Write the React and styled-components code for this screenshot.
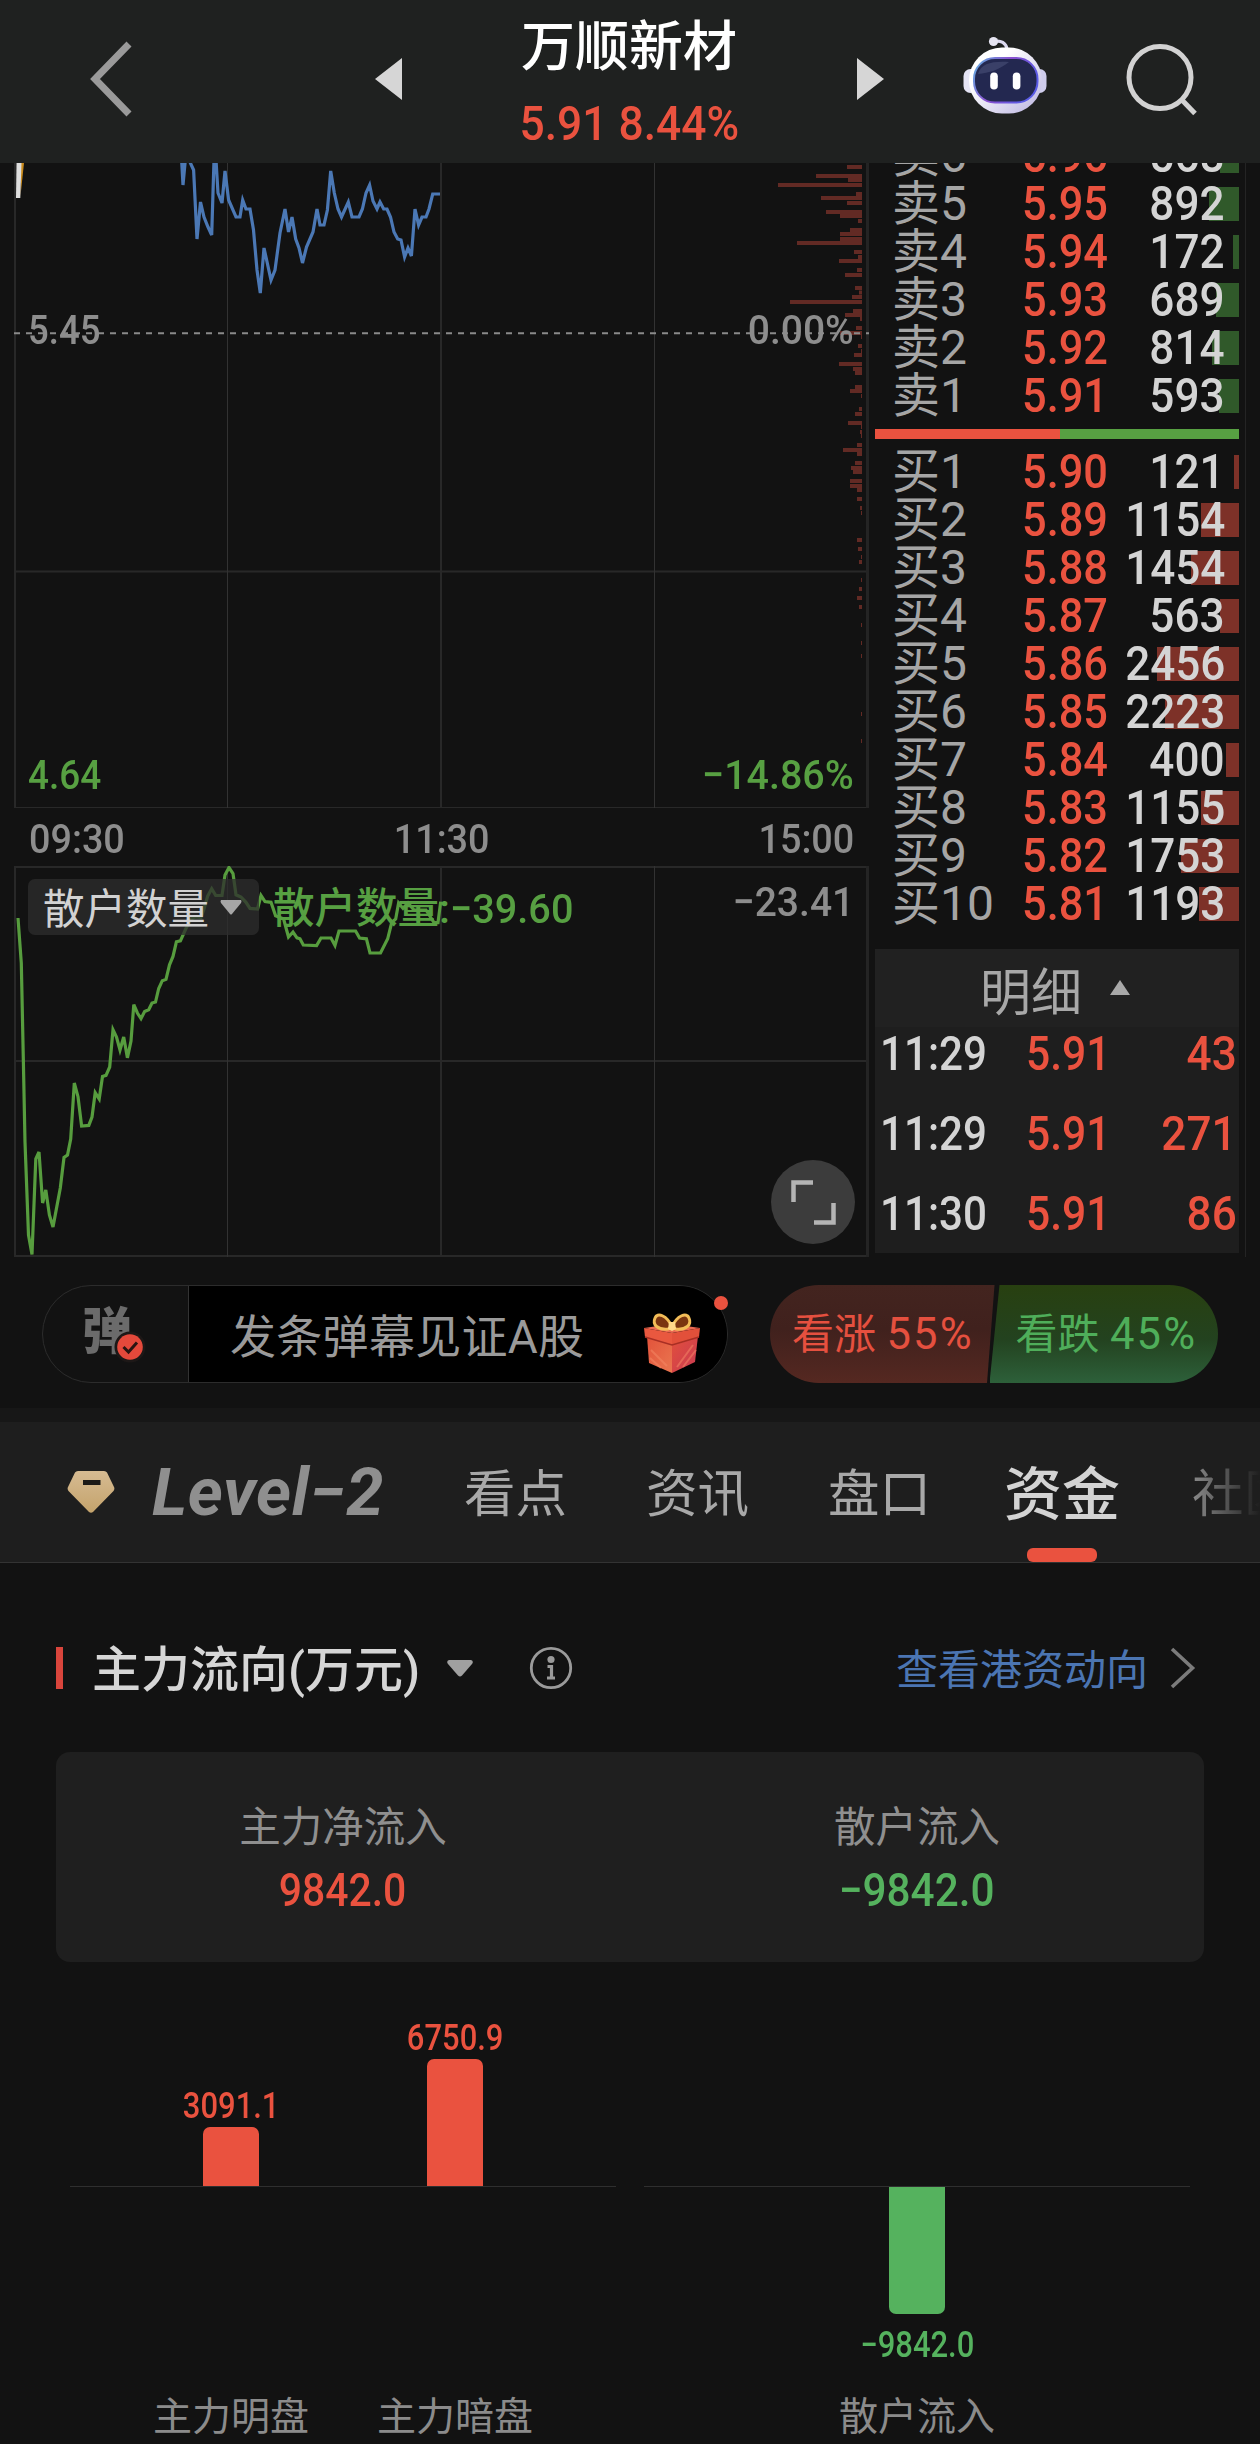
import React from 'react'
import styled, { createGlobalStyle } from 'styled-components'

const RED = '#ea523f'
const GREEN = '#55b25e'
const CHART_GREEN = '#57a042'

const sells = [
  { label: '卖6', price: '5.96', volume: 568 },
  { label: '卖5', price: '5.95', volume: 892 },
  { label: '卖4', price: '5.94', volume: 172 },
  { label: '卖3', price: '5.93', volume: 689 },
  { label: '卖2', price: '5.92', volume: 814 },
  { label: '卖1', price: '5.91', volume: 593 },
]

const buys = [
  { label: '买1', price: '5.90', volume: 121 },
  { label: '买2', price: '5.89', volume: 1154 },
  { label: '买3', price: '5.88', volume: 1454 },
  { label: '买4', price: '5.87', volume: 563 },
  { label: '买5', price: '5.86', volume: 2456 },
  { label: '买6', price: '5.85', volume: 2223 },
  { label: '买7', price: '5.84', volume: 400 },
  { label: '买8', price: '5.83', volume: 1155 },
  { label: '买9', price: '5.82', volume: 1753 },
  { label: '买10', price: '5.81', volume: 1193 },
]

const trades = [
  { time: '11:29', price: '5.91', volume: '43' },
  { time: '11:29', price: '5.91', volume: '271' },
  { time: '11:30', price: '5.91', volume: '86' },
]

const tabs = ['看点', '资讯', '盘口', '资金', '社区']

const flows = [
  [
    { label: '主力明盘', value: '3091.1', height: 59 },
    { label: '主力暗盘', value: '6750.9', height: 127 },
  ],
  [{ label: '散户流入', value: '−9842.0', height: 127, down: true }],
]

// [y, length] of the volume-by-price bars
const volumeBars = [
  [167, 15], [176, 46], [180, 14], [185, 84], [194, 6], [198, 41], [203, 15], [212, 36], [216, 22], [221, 4],
  [230, 12], [234, 22], [239, 22], [243, 65], [252, 8], [257, 4], [261, 23], [270, 5], [275, 17], [288, 7],
  [292.5, 3], [297, 10], [302, 72], [311, 9], [315, 17], [319, 2], [328, 6], [333, 22], [337, 1], [346, 4],
  [351, 1], [355, 8], [364, 23], [369, 9], [373, 7], [387, 7], [391, 12], [396, 1], [409, 3], [414, 7],
  [423, 14], [427, 1], [432, 2], [436, 1], [445, 5], [450, 19], [454, 5], [463, 7], [468, 11], [472, 9],
  [481, 12], [486, 12], [490, 5], [499, 5], [508, 2], [513, 1], [540, 5], [549, 4], [557, 1], [562, 3],
  [580, 1], [589, 3], [598, 5], [607, 3], [625, 1], [643, 1], [656, 1], [714, 1], [741, 1],
]

const pricePoints =
  '181.5,158 183,185 185.5,158 189,160 193.6,170 197,239 200.5,202 204,217 208,227 211.7,235 214,160 216,160 218,193 222,203 225,171 228.6,200 236,217 240,217 242.7,200 246,209 250,209 253.5,230 257,270 260.3,293 264,248 271,280 275,270 280,233 285,209 288.5,232 292,217 295.7,239 299,248 302.5,263 306.5,247 313,232 317,209 320,225 324,225 327.4,210 330.7,171 334.3,193 338,209 341.5,217 348.3,202 352,217 359,217 362.4,209 366,193 369.6,185 373,201 377,209 380,202 383.7,209 387,209 390.5,217 394,232 397.7,239 401,240 404.6,257 408,248 411.4,256 415,209 418.6,225 422,217 426,217 429,209 432.7,194 440,194'

const countPoints =
  '18,918 21.3,963 23.3,1058 25,1142 28.5,1235 32,1254.5 35.8,1159 39,1152 42.6,1203 45.8,1190 49.4,1215 53,1227 60.3,1188 64,1157.5 67.5,1155 70.7,1139 74.3,1083 78,1096.7 81.6,1126 88.8,1125.4 92,1117 95.2,1092.6 99.2,1099 102.5,1076.4 106,1075.4 109.7,1067 113,1029.7 116.5,1037 120,1050 123.7,1037 127.4,1057.8 131,1041 133.8,1004.7 137.4,1013 141,1018.6 144.6,1011.5 148.7,1009.8 152,1003 155.5,1002 158.7,988.5 162.3,980.7 166,979.4 169.5,964.8 173,956.4 176.4,941.8 180.4,940.8 185.6,929.3 191,919 195,917 201,917.5 204,909 207.7,896 211.7,888.7 215.7,895.5 222,895.5 225,875 229,867.5 233,873.5 236,894.8 241,897 246,902.3 250,908.4 257.5,909 261,895.5 265,901.6 271,902.3 275.6,915.8 283.6,919 288.5,937 293,932 297,937.8 300,938.8 303.3,945 316.6,945.5 321,938 331,938 335,945.5 339,931 355.6,931 359.6,938 366.4,938.8 370,953 380.5,953 387.7,938.8 391.7,922.6 395.7,919 398.6,903 403,908.4 408,903 414,910 426,910 434,922.6 438,922.6 440.7,901.6'

const PriceChart = () => (
  <StPlot viewBox="0 163 870 645" height="645">
    <g stroke="#282828" strokeWidth="2">
      <path d="M15 163V808 M441 163V808 M14 571.5H869 M14 808H869" />
      <path d="M227.5 163V808 M654.5 163V808" strokeWidth="1" stroke="#323232" />
      <path d="M867.5 163V808" strokeWidth="3" stroke="#242424" />
    </g>
    <g fill="#622a24">
      {volumeBars.map(([y, w]) => (
        <rect key={y} x={862 - w} y={y - 2} width={w} height="4" />
      ))}
    </g>
    <path d="M14 333.3H869" stroke="#8a8a8a" strokeWidth="2" strokeDasharray="6 6" />
    <path d="M21 163H24L20.5 196Z" fill="#c98a1b" />
    <path d="M16.5 163H21.5L20.3 198H16Z" fill="#dedede" />
    <polyline points={pricePoints} fill="none" stroke="#4b78b5" strokeWidth="3.2" />
  </StPlot>
)

const CountChart = () => (
  <StPlot viewBox="0 866 870 391" height="391">
    <g stroke="#282828" strokeWidth="2">
      <path d="M15 866V1257 M441 866V1257 M14 867H869 M14 1061H869 M14 1256H869" />
      <path d="M227.5 866V1257 M654.5 866V1257" strokeWidth="1" stroke="#323232" />
      <path d="M867.5 866V1257" strokeWidth="3" stroke="#242424" />
    </g>
    <polyline points={countPoints} fill="none" stroke="#579d3e" strokeWidth="3.2" />
  </StPlot>
)

const Robot = () => (
  <svg width="84" height="80" viewBox="0 0 84 80">
    <defs>
      <linearGradient id="shell" x1="0" y1="0" x2="1" y2="1">
        <stop offset="0.3" stopColor="#ffffff" />
        <stop offset="1" stopColor="#b9b3e0" />
      </linearGradient>
      <linearGradient id="rim" x1="0" y1="0" x2="1" y2="0.4">
        <stop offset="0" stopColor="#5fb3e0" />
        <stop offset="0.5" stopColor="#8a4fd0" />
        <stop offset="1" stopColor="#5a5be6" />
      </linearGradient>
    </defs>
    <path d="M31 5.5C38 4 43 7 44 13" fill="none" stroke="#dcdaf0" strokeWidth="3.2" />
    <circle cx="30.5" cy="5.5" r="4.6" fill="#e6e5f2" />
    <rect x="0.5" y="33" width="14" height="24" rx="7" fill="#e4e3f4" />
    <rect x="69.5" y="33" width="14" height="24" rx="7" fill="#cfcdec" />
    <rect x="6" y="11.5" width="73" height="66" rx="33" fill="url(#shell)" />
    <rect x="11" y="22" width="63.5" height="44.5" rx="21" fill="#232850" stroke="url(#rim)" strokeWidth="2" />
    <path d="M15 38C18 27 30 25 46 26C36 34 26 37 15 38Z" fill="#3a4068" />
    <rect x="27.2" y="36.5" width="7.6" height="17" rx="3.8" fill="#fff" />
    <rect x="49.8" y="36.5" width="7.6" height="17" rx="3.8" fill="#fff" />
  </svg>
)

const Gift = () => (
  <svg width="58" height="62" viewBox="0 0 58 62">
    <defs>
      <linearGradient id="giftLeft" x1="0" y1="0" x2="1" y2="1">
        <stop offset="0" stopColor="#e2523a" />
        <stop offset="1" stopColor="#ea7650" />
      </linearGradient>
      <linearGradient id="giftRight" x1="0" y1="0" x2="1" y2="1">
        <stop offset="0" stopColor="#e2503c" />
        <stop offset="1" stopColor="#c93a52" />
      </linearGradient>
    </defs>
    <path d="M4 24L29 31V61L6 51Z" fill="url(#giftLeft)" />
    <path d="M29 31L55 24L52 50L29 61Z" fill="url(#giftRight)" />
    <path d="M8 38L24 54 M7 46L18 56 M34 55L50 33 M40 55L53 38" stroke="#f58a66" strokeWidth="2" opacity="0.5" />
    <path d="M1 16L29 12L57 16L29 21Z" fill="#ea6a52" />
    <path d="M1 16L29 21V33L2 25Z" fill="#e9583f" />
    <path d="M57 16L29 21V33L56 25Z" fill="#e2503a" />
    <path d="M2 25L29 33L56 25" fill="none" stroke="#a82f24" strokeWidth="1.5" />
    <path d="M29 15C24 3 14 0 12 6C9 13 15 18 25 17Z" fill="#7a3510" stroke="#f2bd58" strokeWidth="3" />
    <path d="M29 15C34 3 44 0 46 6C49 13 43 18 33 17Z" fill="#7a3510" stroke="#f2bd58" strokeWidth="3" />
    <path d="M26 10L32 10L33 17L29 19L25 17Z" fill="#ffd98a" />
  </svg>
)

const OrderRow = ({ label, price, volume, side }) => (
  <StOrderRow>
    <StOrderLabel>{label}</StOrderLabel>
    <StOrderPrice>
      <StNum $origin="left" $scale={0.885}>{price}</StNum>
    </StOrderPrice>
    <StOrderVolume>
      <StVolumeBar $side={side} style={{ width: Math.max(5, volume / 30) }} />
      <StNum $origin="right" $scale={0.9}>{volume}</StNum>
    </StOrderVolume>
  </StOrderRow>
)

const FlowGroup = ({ items }) => (
  <StFlowGroup>
    <StFlowRow $height={225} $axis>
      {items.map((item) => (
        <StFlowCell key={item.label} $align="flex-end">
          {!item.down && (
            <>
              <StFlowValue $color={RED}>{item.value}</StFlowValue>
              <StBar $color={RED} style={{ height: item.height }} />
            </>
          )}
        </StFlowCell>
      ))}
    </StFlowRow>
    <StFlowRow $height={205}>
      {items.map((item) => (
        <StFlowCell key={item.label} $align="flex-start">
          {item.down && (
            <>
              <StBar $color={GREEN} $down style={{ height: item.height }} />
              <StFlowValue $color={GREEN} $down>{item.value}</StFlowValue>
            </>
          )}
        </StFlowCell>
      ))}
    </StFlowRow>
    <StFlowRow $height={50}>
      {items.map((item) => (
        <StFlowLabel key={item.label}>{item.label}</StFlowLabel>
      ))}
    </StFlowRow>
  </StFlowGroup>
)

const App = () => {
  return (
    <StPage>
      <GlobalStyle />
      <StHeader>
        <StBack width="44" height="76" viewBox="0 0 44 76">
          <path d="M41 3L7 38L41 73" fill="none" stroke="#9a9a9a" strokeWidth="7" />
        </StBack>
        <StPrev width="27" height="42" viewBox="0 0 27 42">
          <path d="M27 0V42L0 21Z" fill="#d6d6d6" />
        </StPrev>
        <StTitle>
          <StName>万顺新材</StName>
          <StQuote>
            <StNum $origin="center" $scale={0.905}>5.91 8.44%</StNum>
          </StQuote>
        </StTitle>
        <StNext width="27" height="42" viewBox="0 0 27 42">
          <path d="M0 0V42L27 21Z" fill="#d6d6d6" />
        </StNext>
        <StAssistant>
          <Robot />
        </StAssistant>
        <StSearch width="74" height="74" viewBox="0 0 74 74">
          <circle cx="35" cy="35.5" r="31" fill="none" stroke="#d2d2d2" strokeWidth="5" />
          <path d="M56.5 57.5L70 71.5" stroke="#d2d2d2" strokeWidth="5" />
        </StSearch>
      </StHeader>

      <StQuotes>
        <StCharts>
          <StChartBox $height={645}>
            <PriceChart />
            <StMark $left={28} $top={147}>
              <StNum $origin="left" $scale={0.88}>5.45</StNum>
            </StMark>
            <StMark $right={15} $top={147}>
              <StNum $origin="right" $scale={0.94}>0.00%</StNum>
            </StMark>
            <StMark $left={28} $top={592} $color={CHART_GREEN}>
              <StNum $origin="left" $scale={0.89}>4.64</StNum>
            </StMark>
            <StMark $right={15} $top={592} $color={CHART_GREEN}>
              <StNum $origin="right" $scale={0.95}>−14.86%</StNum>
            </StMark>
          </StChartBox>
          <StTimeAxis>
            <StNum $origin="left">09:30</StNum>
            <StNum $origin="center">11:30</StNum>
            <StNum $origin="right">15:00</StNum>
          </StTimeAxis>
          <StChartBox $height={391}>
            <CountChart />
            <StIndicator>
              <StIndicatorName>散户数量</StIndicatorName>
              <svg width="22" height="15" viewBox="0 0 22 15">
                <path d="M1 0H21Q22 1 21 3L12 14Q11 15 10 14L1 3Q0 1 1 0Z" fill="#a6a6a6" />
              </svg>
            </StIndicator>
            <StIndicatorValue>
              散户数量:<StNum $origin="left" $scale={0.955}>−39.60</StNum>
            </StIndicatorValue>
            <StMark $right={15} $top={16}>
              <StNum $origin="right" $scale={0.94}>−23.41</StNum>
            </StMark>
            <StExpand>
              <svg width="46" height="46" viewBox="0 0 46 46">
                <path d="M3.5 23V3.5H23 M43.5 24V43.5H24" fill="none" stroke="#b4b4b4" strokeWidth="4.5" />
              </svg>
            </StExpand>
          </StChartBox>
        </StCharts>

        <StBook>
          <StSells>
            {sells.map((row) => (
              <OrderRow key={row.label} {...row} side="sell" />
            ))}
          </StSells>
          <StRatio />
          {buys.map((row) => (
            <OrderRow key={row.label} {...row} side="buy" />
          ))}
          <StTrades>
            <StTradesHead>
              明细
              <svg width="20" height="15" viewBox="0 0 20 15">
                <path d="M10 0L20 15H0Z" fill="#a8a8a8" />
              </svg>
            </StTradesHead>
            <StTradeList>
              {trades.map((trade, i) => (
                <StTrade key={i}>
                  <StTradeTime>
                    <StNum $origin="left" $scale={0.86}>{trade.time}</StNum>
                  </StTradeTime>
                  <StTradePrice>
                    <StNum $origin="left" $scale={0.87}>{trade.price}</StNum>
                  </StTradePrice>
                  <StTradeVolume>
                    <StNum $origin="right" $scale={0.9}>{trade.volume}</StNum>
                  </StTradeVolume>
                </StTrade>
              ))}
            </StTradeList>
          </StTrades>
        </StBook>
      </StQuotes>

      <StSocial>
        <StBarrage>
          <StBarrageSwitch>
            弹
            <StBadge width="32" height="32" viewBox="0 0 32 32">
              <circle cx="16" cy="16" r="15.5" fill="#1d1817" />
              <circle cx="16" cy="16" r="12.8" fill="#e4493b" />
              <path d="M9.5 16L14.5 21L23 11.5" fill="none" stroke="#2a1512" strokeWidth="3" />
            </StBadge>
          </StBarrageSwitch>
          <StBarrageInput>
            <span>发条弹幕见证A股</span>
            <Gift />
          </StBarrageInput>
          <StDot />
        </StBarrage>
        <StVote>
          <StVoteUp>看涨 <StPercent>55%</StPercent></StVoteUp>
          <StVoteDown>看跌 <StPercent>45%</StPercent></StVoteDown>
        </StVote>
      </StSocial>

      <StTabs>
        <StDiamond width="48" height="42" viewBox="0 0 48 42">
          <defs>
            <linearGradient id="gold" x1="0" y1="0" x2="0" y2="1">
              <stop offset="0" stopColor="#d6bb92" />
              <stop offset="1" stopColor="#c4a36c" />
            </linearGradient>
          </defs>
          <path d="M11 0H37Q39 0 40 1.5L47 16Q48 18 46.5 20L26 41Q24 42.5 22 41L1.5 20Q0 18 1 16L8 1.5Q9 0 11 0Z" fill="url(#gold)" />
          <rect x="16" y="9" width="17.5" height="5" fill="#1c1a17" />
        </StDiamond>
        <StLevel>Level−2</StLevel>
        {tabs.map((tab) => (
          <StTab key={tab} $active={tab === '资金'} $faded={tab === '社区'}>
            {tab}
          </StTab>
        ))}
      </StTabs>

      <StSectionHead>
        <StSectionTitle>主力流向(万元)</StSectionTitle>
        <StCaret width="26" height="17" viewBox="0 0 26 17">
          <path d="M2 0H24Q27 1 25 4L15 15.5Q13 17.5 11 15.5L1 4Q-1 1 2 0Z" fill="#a0a0a0" />
        </StCaret>
        <StInfo width="44" height="44" viewBox="0 0 44 44">
          <circle cx="22" cy="22" r="19.7" fill="none" stroke="#9a9a9a" strokeWidth="2.8" />
          <circle cx="22" cy="13.5" r="3.6" fill="#9a9a9a" />
          <path d="M18.5 20.5H22.5V32 M18 32H26" fill="none" stroke="#9a9a9a" strokeWidth="3.2" />
        </StInfo>
        <StLink>
          <StLinkText>查看港资动向</StLinkText>
          <svg width="26" height="42" viewBox="0 0 26 42">
            <path d="M2 2L22.5 21L2 40" fill="none" stroke="#7b7b7b" strokeWidth="3.6" />
          </svg>
        </StLink>
      </StSectionHead>

      <StSummary>
        <StSummaryItem $color={RED}>
          主力净流入
          <StNum $origin="center" $scale={0.88}>9842.0</StNum>
        </StSummaryItem>
        <StSummaryItem $color={GREEN}>
          散户流入
          <StNum $origin="center" $scale={0.91}>−9842.0</StNum>
        </StSummaryItem>
      </StSummary>

      <StFlow>
        {flows.map((items) => (
          <FlowGroup key={items[0].label} items={items} />
        ))}
      </StFlow>
    </StPage>
  )
}

export default App

const GlobalStyle = createGlobalStyle`
  * {
    box-sizing: border-box;
  }
  body {
    margin: 0;
    background: #121212;
    font-family: Roboto, "Noto Sans CJK SC", sans-serif;
  }
  svg {
    display: block;
    flex-shrink: 0;
  }
`;

const StPage = styled.div`
  width: 1260px;
  height: 2444px;
  overflow: hidden;
  background: #121212;
  white-space: nowrap;
`;

const StNum = styled.span`
  display: inline-block;
  transform: scaleX(${({ $scale }) => $scale || 0.91});
  transform-origin: ${({ $origin }) => $origin} center;
`;

const StHeader = styled.header`
  position: relative;
  z-index: 1;
  display: flex;
  align-items: flex-start;
  height: 163px;
  background: #1f2120;
`;

const StBack = styled.svg`
  margin: 41px 0 0 88px;
`;

const StPrev = styled.svg`
  margin: 58px 0 0 243px;
`;

const StTitle = styled.div`
  width: 260px;
  margin-left: 97px;
  padding-top: 13px;
  text-align: center;
`;

const StName = styled.div`
  color: #fff;
  font-size: 54px;
  font-weight: 500;
  line-height: 70px;
`;

const StQuote = styled.div`
  margin-top: 11px;
  color: ${RED};
  font-size: 49px;
  font-weight: 500;
  line-height: 60px;
`;

const StNext = styled.svg`
  margin: 58px 0 0 98px;
`;

const StAssistant = styled.div`
  margin: 36px 0 0 79px;
`;

const StSearch = styled.svg`
  margin: 42px 0 0 78px;
`;

const StQuotes = styled.div`
  display: flex;
  width: 1246px;
  height: 1094px;
  overflow: hidden;
  border-right: 1px solid #242424;
`;

const StCharts = styled.div`
  width: 869px;
  flex-shrink: 0;
`;

const StChartBox = styled.div`
  position: relative;
  height: ${({ $height }) => $height}px;
`;

const StPlot = styled.svg`
  width: 870px;
`;

const StMark = styled.div`
  position: absolute;
  top: ${({ $top }) => $top}px;
  left: ${({ $left }) => ($left === undefined ? 'auto' : `${$left}px`)};
  right: ${({ $right }) => ($right === undefined ? 'auto' : `${$right}px`)};
  color: ${({ $color }) => $color || '#8d8d8d'};
  font-size: 41.5px;
  font-weight: 500;
  line-height: 40px;
`;

const StTimeAxis = styled.div`
  display: flex;
  justify-content: space-between;
  height: 58px;
  padding: 2px 15px 0 29px;
  color: #8d8d8d;
  font-size: 41.5px;
  font-weight: 500;
  line-height: 58px;
`;

const StIndicator = styled.div`
  position: absolute;
  top: 13px;
  left: 28px;
  display: flex;
  align-items: center;
  gap: 11px;
  width: 231px;
  height: 56px;
  padding-left: 15px;
  border-radius: 7px;
  background: rgba(46, 46, 46, 0.75);
  color: #d2d2d2;
`;

const StIndicatorName = styled.span`
  padding-top: 5px;
  font-size: 41.5px;
  line-height: 56px;
`;

const StIndicatorValue = styled.div`
  position: absolute;
  top: 15px;
  left: 273px;
  color: ${CHART_GREEN};
  font-size: 41.5px;
  font-weight: 500;
  line-height: 56px;
`;

const StExpand = styled.div`
  position: absolute;
  top: 294px;
  left: 771px;
  display: flex;
  align-items: center;
  justify-content: center;
  width: 84px;
  height: 84px;
  border-radius: 50%;
  background: #3c3c3c;
`;

const StBook = styled.div`
  width: 370px;
  flex-shrink: 0;
  padding-left: 6px;
`;

const StSells = styled.div`
  margin-top: -31px;
`;

const StOrderRow = styled.div`
  display: grid;
  grid-template-columns: 130px 90px 127px;
  height: 48px;
  padding-left: 17px;
  font-size: 49px;
  font-weight: 500;
  line-height: 48px;
`;

const StOrderLabel = styled.div`
  color: #a5a5a5;
  font-size: 48px;
  font-weight: 400;
`;

const StOrderPrice = styled.div`
  color: ${RED};
`;

const StOrderVolume = styled.div`
  position: relative;
  padding-right: 14px;
  color: #d4d4d4;
  text-align: right;
`;

const StVolumeBar = styled.div`
  position: absolute;
  top: 7px;
  right: 0;
  height: 34px;
  background: ${({ $side }) => ($side === 'sell' ? '#30592a' : '#7d3128')};
`;

const StRatio = styled.div`
  height: 10px;
  margin: 9px 0;
  background: linear-gradient(90deg, ${RED} 185.5px, ${CHART_GREEN} 185.5px);
`;

const StTrades = styled.div`
  height: 304px;
  margin-top: 21px;
  background: #1e1e1e;
`;

const StTradesHead = styled.div`
  display: flex;
  align-items: center;
  gap: 28px;
  height: 78px;
  padding: 2px 0 0 105px;
  background: #212121;
  color: #a8a8a8;
  font-size: 51px;
  font-weight: 400;

  svg {
    margin-bottom: 4px;
  }
`;

const StTradeList = styled.div`
  display: flex;
  flex-direction: column;
  gap: 28px;
`;

const StTrade = styled.div`
  display: flex;
  height: 52px;
  padding: 0 2px 0 5px;
  color: ${RED};
  font-size: 49px;
  font-weight: 500;
  line-height: 53px;
`;

const StTradeTime = styled.div`
  width: 146px;
  color: #d4d4d4;
`;

const StTradePrice = styled.div`
  width: 100px;
`;

const StTradeVolume = styled.div`
  flex: 1;
  text-align: right;
`;

const StSocial = styled.div`
  display: flex;
  height: 165px;
  padding: 28px 42px 0;
  border-bottom: 14px solid #171717;
`;

const StBarrage = styled.div`
  position: relative;
  display: flex;
  width: 686px;
  height: 98px;
  border: 1px solid #2c2c2c;
  border-radius: 49px;
`;

const StBarrageSwitch = styled.div`
  position: relative;
  width: 146px;
  padding-left: 39px;
  border-right: 1px solid #333;
  color: #6b6b6b;
  font-size: 50px;
  font-weight: 900;
  line-height: 92px;
`;

const StBadge = styled.svg`
  position: absolute;
  top: 45px;
  left: 71px;
`;

const StBarrageInput = styled.div`
  display: flex;
  flex: 1;
  align-items: center;
  justify-content: space-between;
  padding: 0 26px 0 41px;
  border-radius: 0 48px 48px 0;
  background: #000;
  color: #9a9a9a;
  font-size: 46px;
  letter-spacing: 0.3px;

  span {
    margin-top: -3px;
  }
  svg {
    margin-top: 17px;
  }
`;

const StDot = styled.div`
  position: absolute;
  top: 10px;
  right: -1px;
  width: 14px;
  height: 14px;
  border-radius: 50%;
  background: ${RED};
`;

const StVote = styled.div`
  display: flex;
  width: 448px;
  height: 98px;
  margin-left: 42px;
  overflow: hidden;
  border-radius: 49px;
  font-size: 42px;
  line-height: 100px;
`;

const StPercent = styled.span`
  font-size: 43.5px;
  letter-spacing: 2.2px;
`;

const StVoteUp = styled.div`
  width: 227px;
  padding-left: 22px;
  background: linear-gradient(#43241f, #40211d 45%, #552821);
  clip-path: polygon(0 0, 100% 0, 217px 100%, 0 100%);
  color: #e5503f;
`;

const StVoteDown = styled.div`
  width: 231px;
  margin-left: -5px;
  padding-left: 26px;
  background: linear-gradient(#284010, #23421f 55%, #2d603a);
  clip-path: polygon(10px 0, 100% 0, 100% 100%, 0 100%);
  color: #4fae5a;
`;

const StTabs = styled.nav`
  display: flex;
  align-items: center;
  height: 141px;
  overflow: hidden;
  border-bottom: 1px solid #333;
  background: #1e1e1e;
`;

const StDiamond = styled.svg`
  margin-left: 67px;
`;

const StLevel = styled.div`
  flex-shrink: 0;
  width: 312px;
  margin-left: 37px;
  color: #8f8f8f;
  font-size: 67px;
  font-style: italic;
  font-weight: 700;
  letter-spacing: 0.6px;
`;

const StTab = styled.div`
  position: relative;
  flex-shrink: 0;
  width: ${({ $active }) => ($active ? 116 : 103)}px;
  margin-right: ${({ $active }) => ($active ? 72 : 79)}px;
  margin-left: ${({ $active }) => ($active ? -6 : 0)}px;
  padding-top: 6px;
  color: ${({ $active }) => ($active ? '#d3d3d3' : '#a8a8a8')};
  font-size: ${({ $active }) => ($active ? 58 : 51.5)}px;
  font-weight: ${({ $active }) => ($active ? 500 : 400)};
  line-height: 134px;
  ${({ $faded }) => $faded && `
    background: linear-gradient(90deg, #8a8a8a, #1e1e1e 68px);
    background-clip: text;
    color: transparent;
  `}
  ${({ $active }) => $active && `
    &::after {
      content: '';
      position: absolute;
      bottom: 0;
      left: 23px;
      width: 70px;
      height: 14px;
      border-radius: 6px;
      background: ${RED};
    }
  `}
`;

const StSectionHead = styled.div`
  display: flex;
  align-items: center;
  height: 42px;
  margin: 84px 64px 0 56px;
  border-left: 7px solid #d9453c;
`;

const StSectionTitle = styled.h2`
  width: 327px;
  margin: 6px 0 0 29px;
  color: #d6d6d6;
  font-size: 49px;
  font-weight: 500;
  line-height: 46px;
`;

const StCaret = styled.svg`
  margin-left: 28px;
`;

const StInfo = styled.svg`
  margin-left: 56px;
`;

const StLink = styled.a`
  display: flex;
  align-items: center;
  gap: 22px;
  margin-left: auto;
  color: #4b75b2;
`;

const StLinkText = styled.span`
  padding-top: 5px;
  font-size: 42px;
  line-height: 42px;
`;

const StSummary = styled.div`
  display: flex;
  height: 210px;
  margin: 63px 56px 0;
  border-radius: 14px;
  background: #1f1f1f;
`;

const StSummaryItem = styled.div`
  display: flex;
  flex: 1;
  flex-direction: column;
  align-items: center;
  padding-top: 48px;
  color: #8f8f8f;
  font-size: 41.5px;
  line-height: 56px;

  ${StNum} {
    margin-top: 6px;
    color: ${({ $color }) => $color};
    font-size: 46.5px;
    font-weight: 500;
  }
`;

const StFlow = styled.div`
  display: flex;
  gap: 28px;
  height: 482px;
  padding: 0 70px;
`;

const StFlowGroup = styled.div`
  flex: 1;
`;

const StFlowRow = styled.div`
  display: flex;
  height: ${({ $height }) => $height}px;
  padding: 0 49px;
  border-bottom: ${({ $axis }) => ($axis ? '1px solid #2f2f2f' : 'none')};
`;

const StFlowCell = styled.div`
  display: flex;
  flex: 1;
  flex-direction: column;
  align-items: center;
  justify-content: ${({ $align }) => $align};
`;

const StFlowValue = styled.div`
  margin: ${({ $down }) => ($down ? '11px 0 0' : '0 0 1px')};
  transform: scaleX(0.86);
  color: ${({ $color }) => $color};
  font-size: 36px;
  font-weight: 500;
  line-height: 40px;
`;

const StBar = styled.div`
  width: 56px;
  border-radius: ${({ $down }) => ($down ? '0 0 7px 7px' : '7px 7px 0 0')};
  background: ${({ $color }) => $color};
`;

const StFlowLabel = styled.div`
  flex: 1;
  color: #8b8b8b;
  font-size: 39px;
  line-height: 50px;
  text-align: center;
`;
